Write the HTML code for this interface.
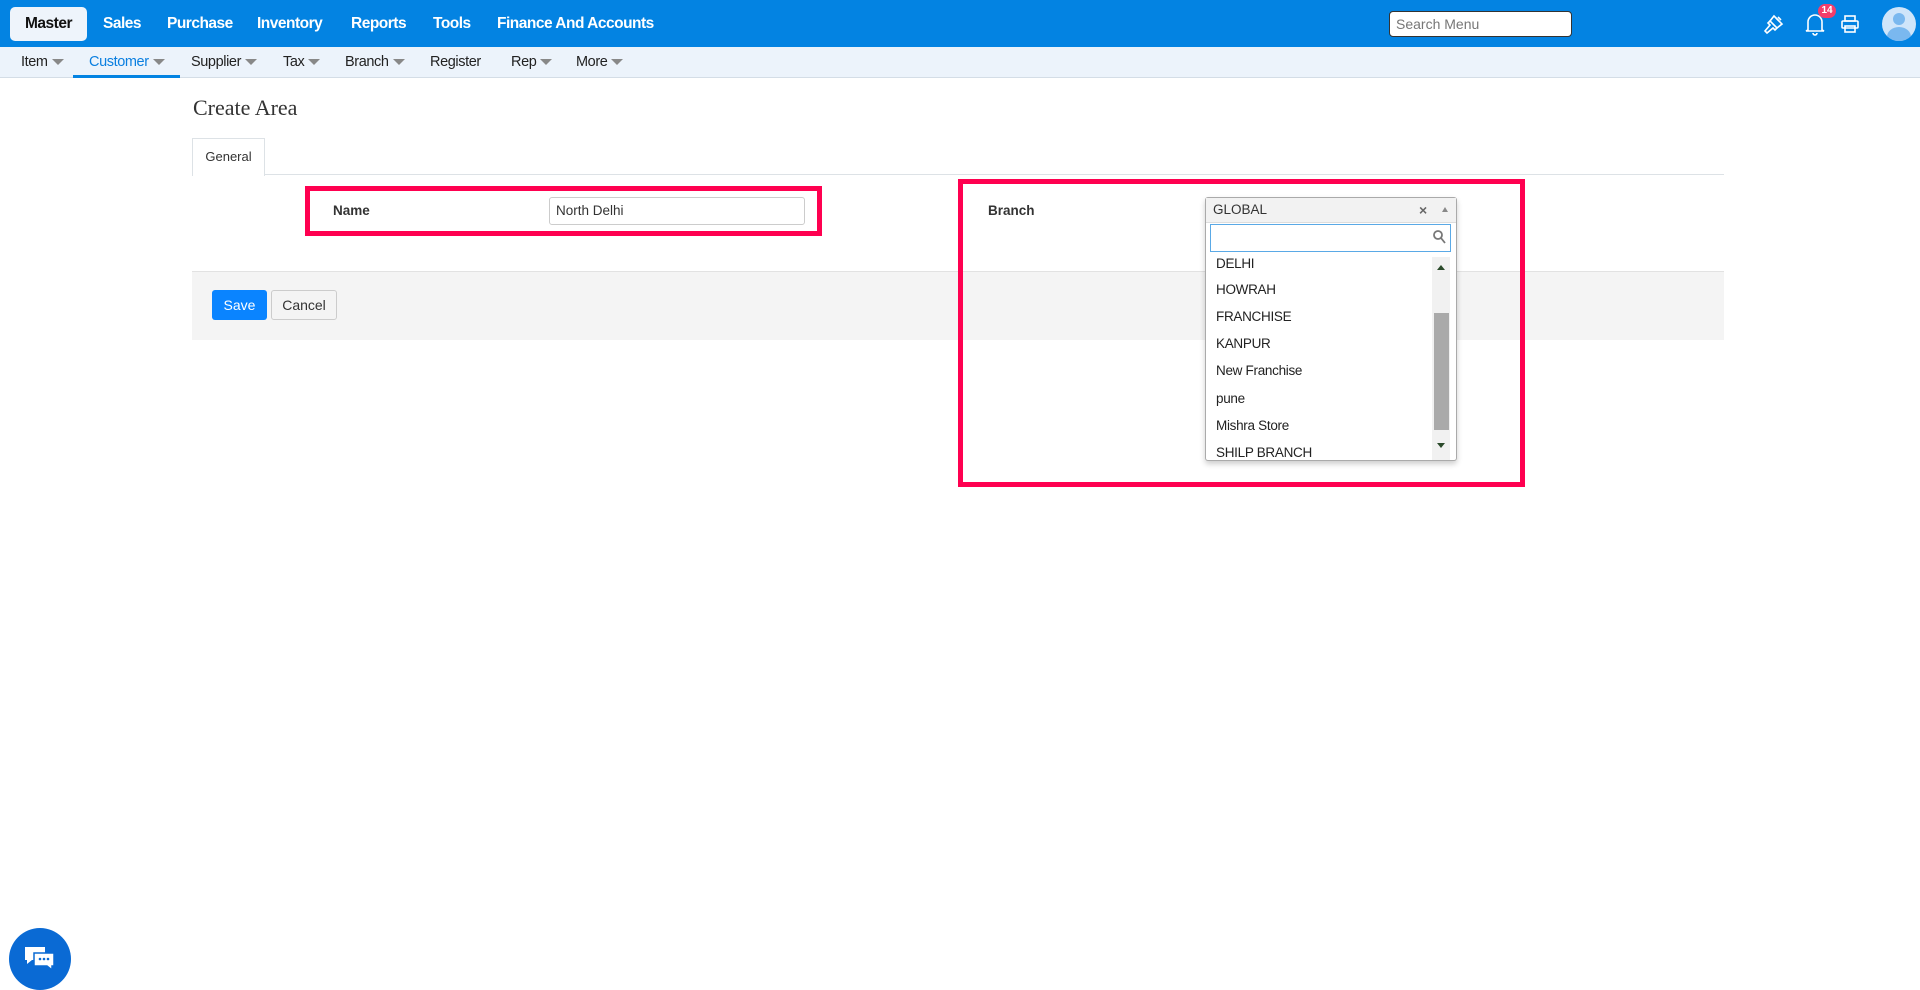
<!DOCTYPE html>
<html><head><meta charset="utf-8"><style>
*{box-sizing:border-box;margin:0;padding:0}
body{width:1920px;height:976px;overflow:hidden;background:#fff;font-family:"Liberation Sans",sans-serif;position:relative;color:#222}
.abs{position:absolute}
.nav{left:0;top:0;width:1920px;height:47px;background:#0383e2}
.n{position:absolute;top:15px;color:#fff;font-weight:bold;font-size:15.5px;letter-spacing:-0.5px}
.master{left:10px;top:7px;width:77px;height:34px;background:#eef4fb;border-radius:5px;color:#111;font-weight:bold;font-size:15.5px;letter-spacing:-0.5px;text-align:center;line-height:34px}
.sub{left:0;top:47px;width:1920px;height:31px;background:#ecf3fb;border-bottom:1px solid #d4dde6}
.s{position:absolute;top:54px;font-size:14.5px;color:#222;letter-spacing:-0.4px}
.car{display:inline-block;width:0;height:0;border-left:6px solid transparent;border-right:6px solid transparent;border-top:6px solid #888;margin-left:4px;vertical-align:middle}
.red{border:5px solid #ff0050}
.item{position:absolute;left:1216px;font-size:13.5px;color:#222;letter-spacing:-0.3px}
</style></head><body>
<div class="abs nav"></div>
<div class="abs master">Master</div>
<span class="n" style="left:103px">Sales</span>
<span class="n" style="left:167px">Purchase</span>
<span class="n" style="left:257px">Inventory</span>
<span class="n" style="left:351px">Reports</span>
<span class="n" style="left:433px">Tools</span>
<span class="n" style="left:497px">Finance And Accounts</span>
<div class="abs" style="left:1389px;top:11px;width:183px;height:26px;background:#fff;border:1px solid #333;border-radius:4px;font-size:14px;color:#777;padding:4px 6px">Search Menu</div>
<svg class="abs" style="left:1762px;top:12px" width="24" height="24" viewBox="0 0 24 24" fill="none" stroke="#fff" stroke-width="1.6"><path d="M12 4l8 8-5 4-7-7z"/><path d="M8 9l-2 2 2 2-5 6 2 2 6-5 2 2 2-2"/><path d="M14 6l3 3M16 5l3 3"/></svg>
<svg class="abs" style="left:1803px;top:11px" width="24" height="26" viewBox="0 0 24 26" fill="none" stroke="#fff" stroke-width="1.6"><path d="M5 19V11a7 7 0 0 1 14 0v8l2 1H3z"/><path d="M10 22a2 2 0 0 0 4 0"/></svg>
<div class="abs" style="left:1818px;top:4px;width:18px;height:14px;background:#f43d6b;border-radius:7px;color:#fff;font-size:10px;font-weight:bold;text-align:center;line-height:14px">14</div>
<svg class="abs" style="left:1840px;top:14px" width="20" height="20" viewBox="0 0 20 20" fill="none" stroke="#fff" stroke-width="1.6"><rect x="5" y="2" width="10" height="5"/><rect x="2" y="7" width="16" height="7" rx="1"/><rect x="5" y="12" width="10" height="6"/></svg>
<div class="abs" style="left:1882px;top:7px;width:34px;height:34px;border-radius:50%;background:#cfe5fa;overflow:hidden"><div class="abs" style="left:11px;top:6px;width:12px;height:12px;border-radius:50%;background:#7ab8ef"></div><div class="abs" style="left:5px;top:20px;width:24px;height:20px;border-radius:50%;background:#7ab8ef"></div></div>

<div class="abs sub"></div>
<span class="s" style="left:21px">Item<i class="car"></i></span>
<span class="s" style="left:89px;color:#0a7fe0">Customer<i class="car"></i></span>
<div class="abs" style="left:73px;top:75px;width:107px;height:3px;background:#0383e2"></div>
<span class="s" style="left:191px">Supplier<i class="car"></i></span>
<span class="s" style="left:283px">Tax<i class="car"></i></span>
<span class="s" style="left:345px">Branch<i class="car"></i></span>
<span class="s" style="left:430px">Register</span>
<span class="s" style="left:511px">Rep<i class="car"></i></span>
<span class="s" style="left:576px">More<i class="car"></i></span>

<div class="abs" style="left:193px;top:95px;font-family:'Liberation Serif',serif;font-size:22px;color:#333">Create Area</div>
<div class="abs" style="left:192px;top:174px;width:1532px;height:1px;background:#dde2e6"></div>
<div class="abs" style="left:192px;top:138px;width:73px;height:38px;background:#fff;border:1px solid #dde2e6;border-bottom:none;font-size:13px;text-align:center;line-height:36px;color:#333">General</div>

<div class="abs red" style="left:305px;top:186px;width:517px;height:50px"></div>
<div class="abs" style="left:333px;top:203px;font-size:13.5px;font-weight:bold;color:#333">Name</div>
<div class="abs" style="left:549px;top:197px;width:256px;height:28px;border:1px solid #ccc;border-radius:3px;font-size:13.5px;padding:5px 6px;color:#333">North Delhi</div>

<div class="abs" style="left:192px;top:271px;width:1532px;height:69px;background:#f4f4f4;border-top:1px solid #e2e2e2"></div>
<div class="abs" style="left:212px;top:290px;width:55px;height:30px;background:#0a84ff;border-radius:3px;color:#fff;font-size:14px;text-align:center;line-height:30px">Save</div>
<div class="abs" style="left:271px;top:290px;width:66px;height:30px;background:#f4f4f4;border:1px solid #ccc;border-radius:3px;color:#333;font-size:14px;text-align:center;line-height:28px">Cancel</div>

<div class="abs red" style="left:958px;top:179px;width:567px;height:308px"></div>
<div class="abs" style="left:988px;top:203px;font-size:13.5px;font-weight:bold;color:#333">Branch</div>
<div class="abs" style="left:1205px;top:197px;width:252px;height:264px;border:1px solid #aaa;border-radius:3px;background:#fff;box-shadow:0 3px 6px rgba(0,0,0,.2)"></div>
<div class="abs" style="left:1206px;top:198px;width:250px;height:25px;background:#f2f2f2;border-bottom:1px solid #ddd;font-size:13.5px;padding:4px 7px;color:#333">GLOBAL</div>
<div class="abs" style="left:1419px;top:202px;font-size:14px;color:#666;font-weight:bold">×</div>
<div class="abs" style="left:1442px;top:207px;border-left:3px solid transparent;border-right:3px solid transparent;border-bottom:5px solid #888"></div>
<div class="abs" style="left:1210px;top:224px;width:241px;height:28px;border:1px solid #5aa9e6"></div>
<svg class="abs" style="left:1432px;top:229px" width="14" height="16" viewBox="0 0 14 16" fill="none" stroke="#777" stroke-width="1.8"><circle cx="6" cy="6" r="4"/><path d="M9 9l4 5"/></svg>
<div class="item" style="top:256px">DELHI</div>
<div class="item" style="top:282px">HOWRAH</div>
<div class="item" style="top:309px">FRANCHISE</div>
<div class="item" style="top:336px">KANPUR</div>
<div class="item" style="top:363px">New Franchise</div>
<div class="item" style="top:391px">pune</div>
<div class="item" style="top:418px">Mishra Store</div>
<div class="abs" style="left:1206px;top:445px;width:226px;height:15px;overflow:hidden"><div style="position:absolute;left:10px;top:0;font-size:13.5px;color:#222;letter-spacing:-0.3px">SHILP BRANCH</div></div>
<div class="abs" style="left:1432px;top:257px;width:18px;height:203px;background:#f1f1f1"></div>
<div class="abs" style="left:1434px;top:313px;width:15px;height:117px;background:#aaa"></div>
<div class="abs" style="left:1437px;top:265px;border-left:4px solid transparent;border-right:4px solid transparent;border-bottom:5px solid #2b4a2b"></div>
<div class="abs" style="left:1437px;top:443px;border-left:4px solid transparent;border-right:4px solid transparent;border-top:5px solid #2b4a2b"></div>

<div class="abs" style="left:9px;top:928px;width:62px;height:62px;border-radius:50%;background:#0a6ad4"></div>
<svg class="abs" style="left:22px;top:944px" width="36" height="30" viewBox="0 0 36 30"><path d="M3 3h20v13H10l-5 4v-4H3z" fill="#fff"/><path d="M12 9h20v13h-2v4l-5-4H12z" fill="#fff" stroke="#0a6ad4" stroke-width="1.5"/><circle cx="18" cy="15" r="1.3" fill="#0a6ad4"/><circle cx="22" cy="15" r="1.3" fill="#0a6ad4"/><circle cx="26" cy="15" r="1.3" fill="#0a6ad4"/></svg>
</body></html>
